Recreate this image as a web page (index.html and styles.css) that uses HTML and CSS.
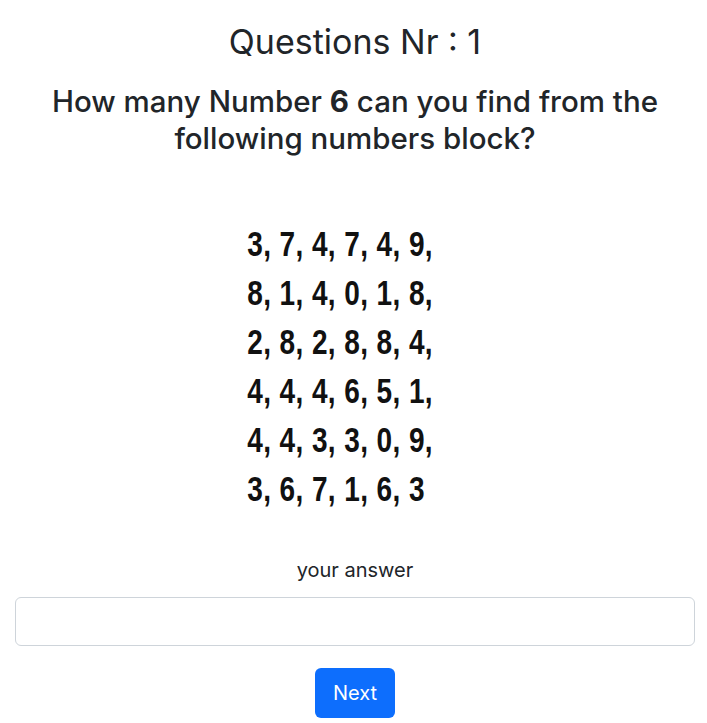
FILE: index.html
```html
<!DOCTYPE html>
<html>
<head>
<meta charset="utf-8">
<link rel="stylesheet" href="styles.css">
</head>
<body>
<div class="container">
  <h2 class="title">Questions Nr : 1</h2>
  <h3 class="question">How many Number <b>6</b> can you find from the following numbers block?</h3>
  <div class="numbers">
    <div>3, 7, 4, 7, 4, 9,</div>
    <div>8, 1, 4, 0, 1, 8,</div>
    <div>2, 8, 2, 8, 8, 4,</div>
    <div>4, 4, 4, 6, 5, 1,</div>
    <div>4, 4, 3, 3, 0, 9,</div>
    <div>3, 6, 7, 1, 6, 3</div>
  </div>
  <label class="label" for="ans">your answer</label>
  <input class="input" id="ans" type="text">
  <button class="btn">Next</button>
</div>
</body>
</html>
```

FILE: styles.css
```css
html, body {
  margin: 0;
  padding: 0;
  background: #fff;
}
body {
  font-family: Inter, "Liberation Sans", sans-serif;
  color: #212529;
}
.container {
  display: flex;
  flex-direction: column;
  align-items: center;
  padding: 0 12px 0 15px;
}
.title {
  margin: 22px 0 0;
  font-size: 34px;
  font-weight: normal;
  line-height: 40px;
}
.question {
  margin: 21px 0 0;
  width: 660px;
  text-align: center;
  font-size: 29.5px;
  font-weight: 500;
  line-height: 37px;
}
.question b {
  font-weight: 700;
}
.numbers {
  margin-top: 62px;
  margin-right: 30px;
  font-family: "Liberation Sans", Arial, sans-serif;
  font-weight: bold;
  font-size: 35px;
  line-height: 49px;
  letter-spacing: 0.5px;
  color: #111;
  text-align: left;
  transform: scaleX(0.8);
}
.label {
  margin-top: 45px;
  font-size: 20px;
  line-height: 24px;
}
.input {
  margin-top: 15px;
  width: 100%;
  box-sizing: border-box;
  height: 49px;
  border: 1px solid #ced4da;
  border-radius: 6px;
  font-size: 20px;
  padding: 6px 12px;
}
.btn {
  margin-top: 22px;
  width: 80px;
  height: 50px;
  background: #0d6efd;
  color: #fff;
  border: none;
  border-radius: 6px;
  font-family: Inter, "Liberation Sans", sans-serif;
  font-size: 20px;
}
```
